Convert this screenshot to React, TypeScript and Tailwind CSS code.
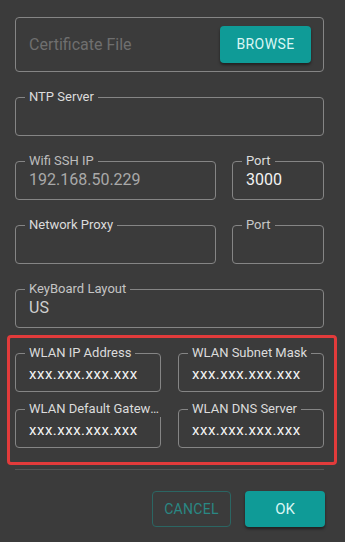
import type { ReactNode } from "react";

type FieldProps = {
  label: string;
  value?: string;
  labelClass?: string;
  valueClass?: string;
};

const Field = ({ label, value, labelClass = "text-[#dcdcdc]", valueClass = "text-[#f2f2f2]" }: FieldProps) => (
  <fieldset className="border border-[#858585] rounded-[4px] px-0 min-w-0">
    <legend className={`ml-[9px] px-1 text-[13px] leading-[16px] whitespace-nowrap ${labelClass}`}>{label}</legend>
    <div className={`h-[30px] pl-[13px] text-[16px] leading-[22px] truncate ${valueClass}`}>{value}</div>
  </fieldset>
);

const WlanField = ({ label, value }: { label: string; value: string }) => (
  <fieldset className="border border-[#858585] rounded-[4px] px-0 min-w-0">
    <legend className="ml-[9px] px-1 text-[13px] leading-[16px] text-[#dcdcdc] max-w-[139px] truncate">{label}</legend>
    <div className="h-[30px] pl-[13px] text-[15px] leading-[26px] tracking-[0.5px] text-[#f4f4f4] whitespace-nowrap">
      {value}
    </div>
  </fieldset>
);

const Row = ({ children }: { children: ReactNode }) => (
  <div className="grid grid-cols-[201px_1fr] gap-x-4">{children}</div>
);

export default function App() {
  return (
    <div
      className="w-[345px] h-[542px] overflow-hidden bg-[#3b3b3b] pl-[15px] pr-[21px] pt-[17px] flex flex-col"
      style={{ fontFamily: "Roboto, 'Noto Sans', sans-serif" }}
    >
      <div className="h-[55px] border border-[#858585] rounded-[4px] flex items-center justify-between pl-[13px] pr-[12px]">
        <span className="text-[16px] text-[#6f6f6f]">Certificate File</span>
        <button className="w-[91px] h-[37px] rounded-[4px] bg-[#0f9b97] text-[#d9f6f4] text-[14px] tracking-[0.4px] shadow-[0_2px_3px_rgba(0,0,0,0.45)]">
          BROWSE
        </button>
      </div>

      <div className="mt-[17px] flex flex-col gap-y-[17px]">
        <Field label="NTP Server" />
        <Row>
          <Field label="Wifi SSH IP" value="192.168.50.229" labelClass="text-[#bdbdbd]" valueClass="text-[#a9a9a9]" />
          <Field label="Port" value="3000" />
        </Row>
        <Row>
          <Field label="Network Proxy" />
          <Field label="Port" labelClass="text-[#c8c8c8]" />
        </Row>
        <Field label="KeyBoard Layout" value="US" labelClass="text-[#c4c4c4]" valueClass="text-[#cfcfcf]" />
      </div>

      <div className="mt-[7px] ml-[-8px] mr-[-13px] border-[3px] border-[#e23b3b] rounded-[4px] pl-[5px] pr-[10px] pt-[7px] pb-[14px]">
        <div className="grid grid-cols-2 gap-x-[17px] gap-y-[9px]">
          <WlanField label="WLAN IP Address" value="xxx.xxx.xxx.xxx" />
          <WlanField label="WLAN Subnet Mask" value="xxx.xxx.xxx.xxx" />
          <WlanField label="WLAN Default Gateway" value="xxx.xxx.xxx.xxx" />
          <WlanField label="WLAN DNS Server" value="xxx.xxx.xxx.xxx" />
        </div>
      </div>

      <div className="mt-[4px] h-px bg-[#555555]" />

      <div className="mt-[21px] flex justify-end gap-x-[14px] mr-[-1px]">
        <button className="w-[79px] h-[36px] rounded-[4px] border border-[#2b6663] text-[#2a8884] text-[14px] tracking-[0.3px]">
          CANCEL
        </button>
        <button className="w-[80px] h-[36px] rounded-[4px] bg-[#0f9b97] text-[#d9f6f4] text-[15px] shadow-[0_2px_3px_rgba(0,0,0,0.45)]">
          OK
        </button>
      </div>
    </div>
  );
}
